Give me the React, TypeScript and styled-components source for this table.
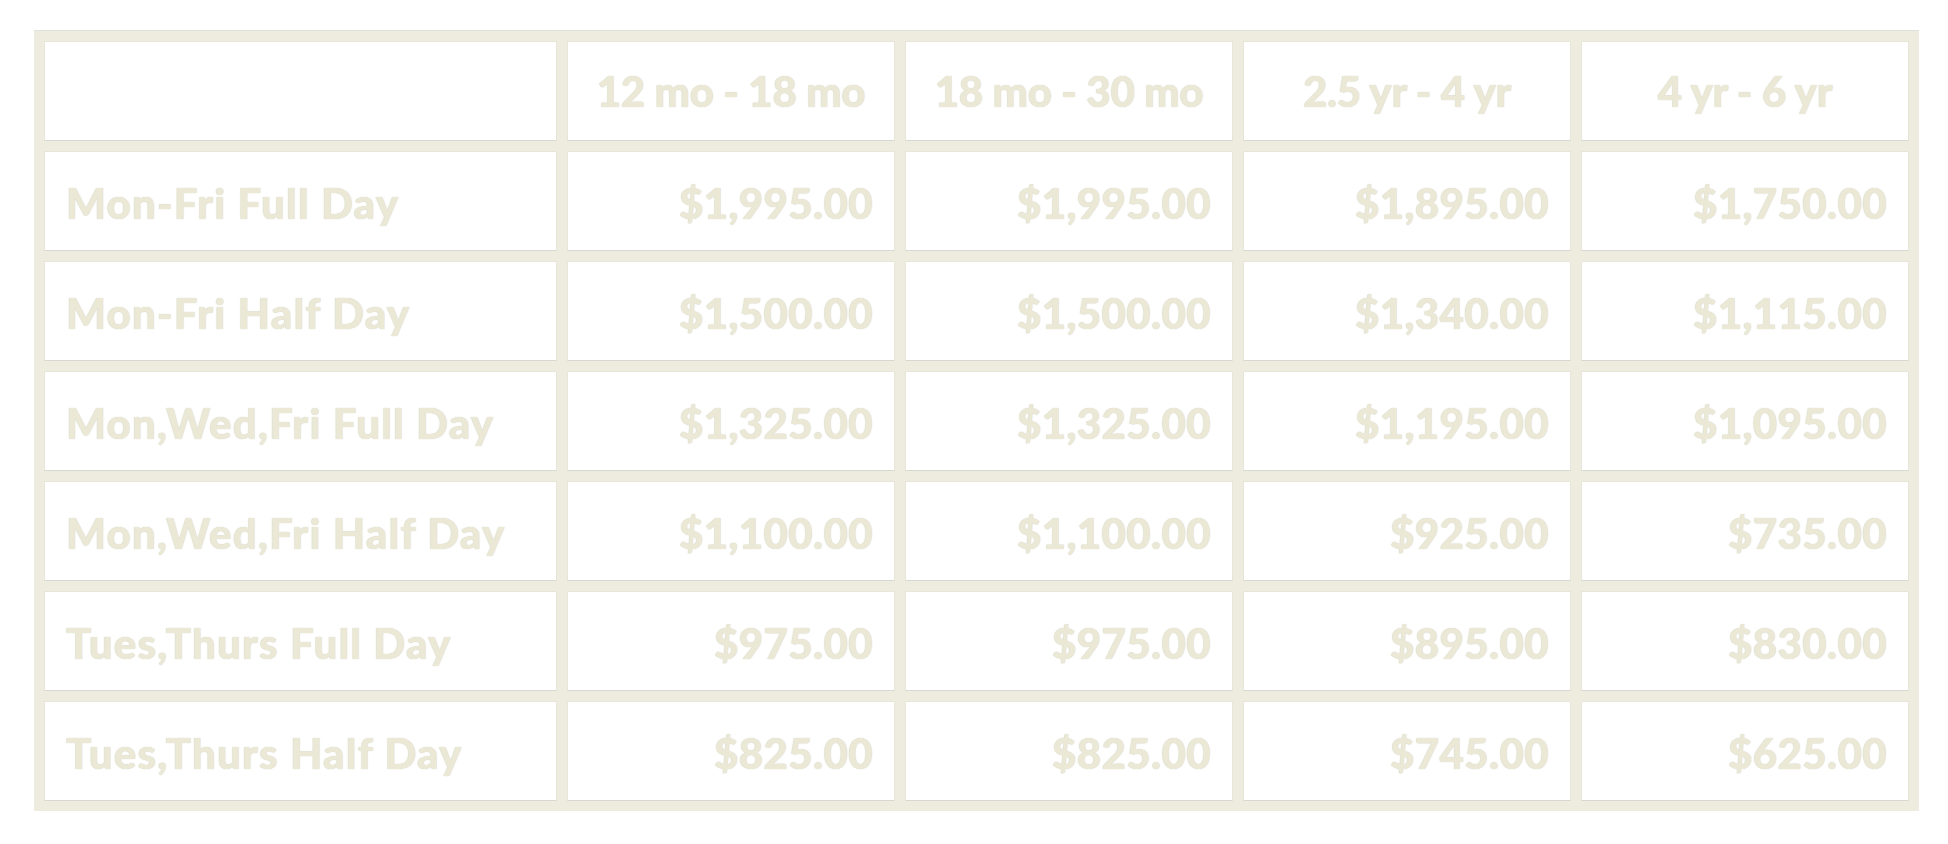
import React from "react";
import styled, { createGlobalStyle } from "styled-components";

const GlobalStyle = createGlobalStyle`
  html, body {
    margin: 0;
    padding: 0;
    background: #ffffff;
  }
`;

const Page = styled.div`
  padding: 30px 29px 0 34px;
  font-family: Lato, "Open Sans", sans-serif;
`;

const Table = styled.table`
  table-layout: fixed;
  width: 1885px;
  border-collapse: separate;
  border-spacing: 10px;
  background: #eeecdf;
  border-top: 1px solid #e0e0dc;
`;

const Col = styled.col<{ $wide?: boolean }>`
  width: ${(p) => (p.$wide ? "513px" : "328px")};
`;

const spacing = {
  left: "1.2px",
  center: "-0.3px",
  right: "0.4px",
};

const Cell = styled.td<{ $align: "left" | "center" | "right" }>`
  box-sizing: border-box;
  height: 100px;
  padding: 4px 21px 0;
  background: #ffffff;
  border: 1px solid #e8e6d8;
  border-bottom-color: #d8d8d2;
  text-align: ${(p) => p.$align};
  vertical-align: middle;
  font-size: 42px;
  font-weight: 900;
  letter-spacing: ${(p) => spacing[p.$align]};
  color: #ebe9d6;
  text-shadow: 0 0 1px rgba(120, 115, 90, 0.4);
  white-space: nowrap;
`;

const HeadCell = styled(Cell)`
  padding-top: 0;
`;

const ages = ["12 mo - 18 mo", "18 mo - 30 mo", "2.5 yr - 4 yr", "4 yr - 6 yr"];

const rows: { label: string; prices: string[] }[] = [
  { label: "Mon-Fri Full Day", prices: ["$1,995.00", "$1,995.00", "$1,895.00", "$1,750.00"] },
  { label: "Mon-Fri Half Day", prices: ["$1,500.00", "$1,500.00", "$1,340.00", "$1,115.00"] },
  { label: "Mon,Wed,Fri Full Day", prices: ["$1,325.00", "$1,325.00", "$1,195.00", "$1,095.00"] },
  { label: "Mon,Wed,Fri Half Day", prices: ["$1,100.00", "$1,100.00", "$925.00", "$735.00"] },
  { label: "Tues,Thurs Full Day", prices: ["$975.00", "$975.00", "$895.00", "$830.00"] },
  { label: "Tues,Thurs Half Day", prices: ["$825.00", "$825.00", "$745.00", "$625.00"] },
];

const App = () => {
  return (
    <Page>
      <GlobalStyle />
      <Table>
        <colgroup>
          <Col $wide />
          {ages.map((age) => (
            <Col key={age} />
          ))}
        </colgroup>
        <tbody>
          <tr>
            <HeadCell $align="center" />
            {ages.map((age) => (
              <HeadCell key={age} $align="center">
                {age}
              </HeadCell>
            ))}
          </tr>
          {rows.map((row) => (
            <tr key={row.label}>
              <Cell $align="left">{row.label}</Cell>
              {row.prices.map((price, i) => (
                <Cell key={i} $align="right">
                  {price}
                </Cell>
              ))}
            </tr>
          ))}
        </tbody>
      </Table>
    </Page>
  );
};

export default App;
